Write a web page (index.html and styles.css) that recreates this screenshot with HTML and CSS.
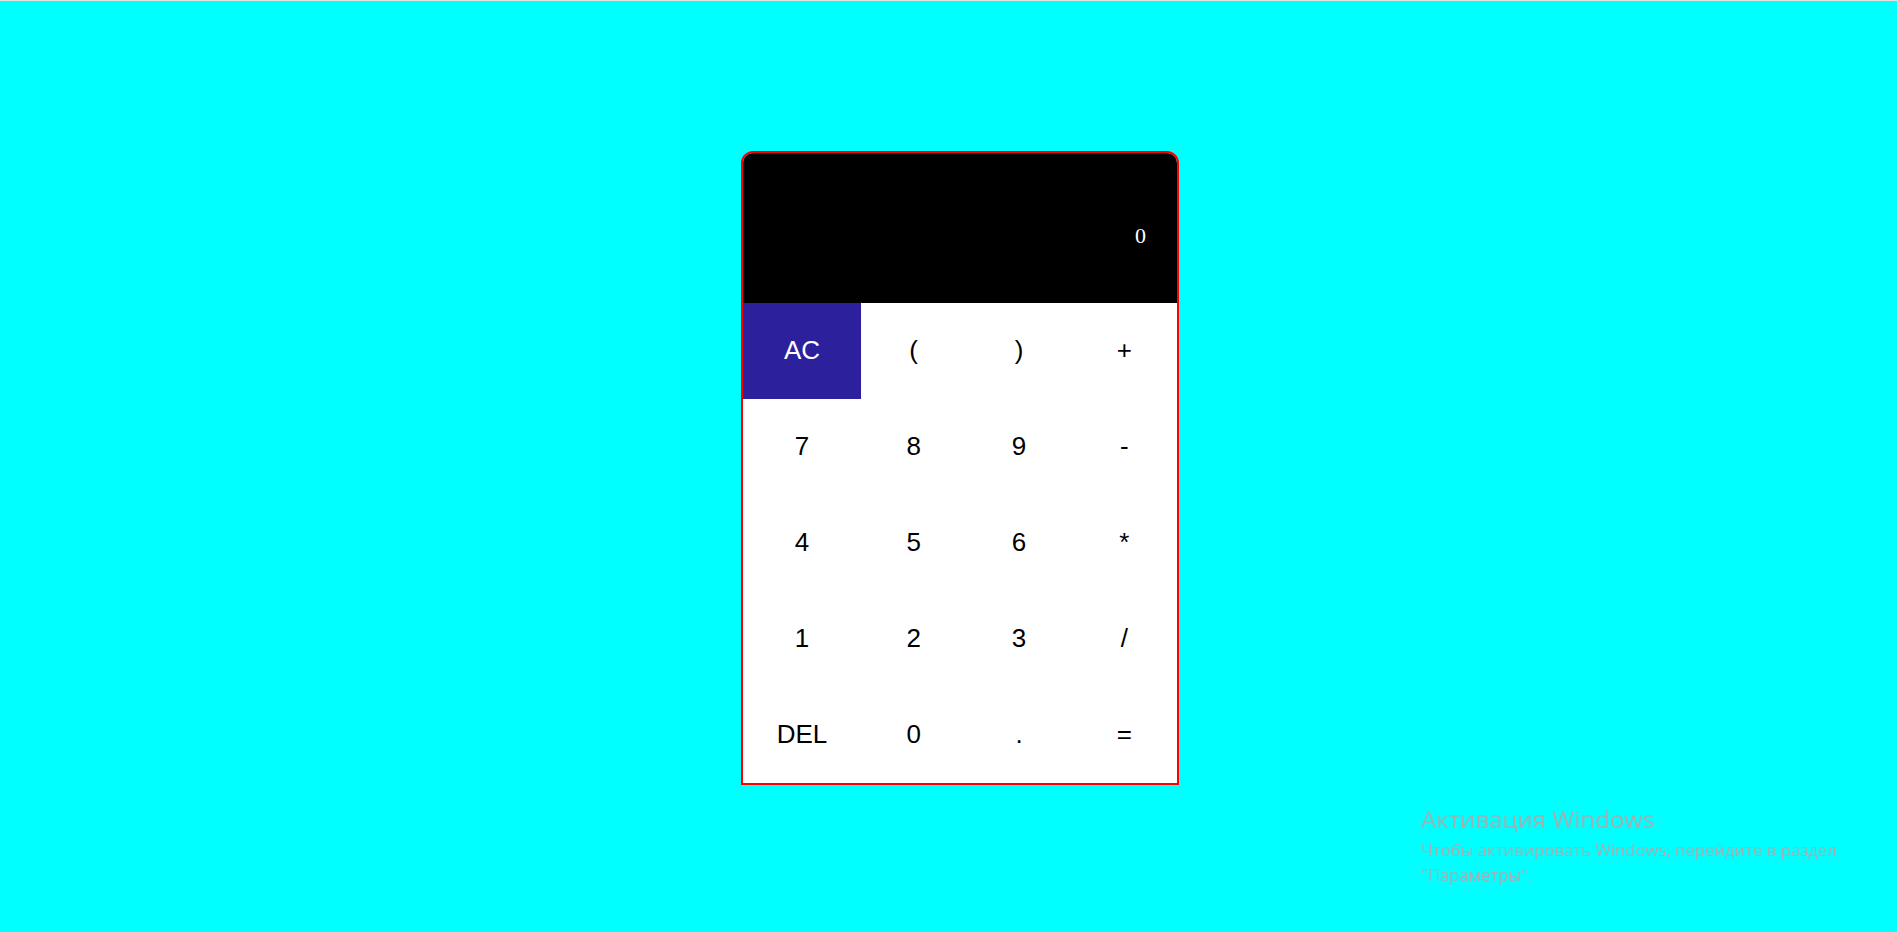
FILE: index.html
```html
<!DOCTYPE html>
<html lang="ru">
<head>
<meta charset="utf-8">
<title>Calculator</title>
<link rel="stylesheet" href="styles.css">
</head>
<body>
  <main class="page">
    <div class="calculator">
      <div class="display"><span class="display-value">0</span></div>
      <div class="keys">
        <button class="key key-clear">AC</button>
        <button class="key">(</button>
        <button class="key">)</button>
        <button class="key">+</button>
        <button class="key">7</button>
        <button class="key">8</button>
        <button class="key">9</button>
        <button class="key">-</button>
        <button class="key">4</button>
        <button class="key">5</button>
        <button class="key">6</button>
        <button class="key">*</button>
        <button class="key">1</button>
        <button class="key">2</button>
        <button class="key">3</button>
        <button class="key">/</button>
        <button class="key">DEL</button>
        <button class="key">0</button>
        <button class="key">.</button>
        <button class="key">=</button>
      </div>
    </div>
  </main>
  <div class="activation">
    <div class="activation-title">Активация Windows</div>
    <div class="activation-text">Чтобы активировать Windows, перейдите в раздел<br>"Параметры".</div>
  </div>
</body>
</html>
```

FILE: styles.css
```css
html {
  margin: 0;
  padding: 0;
  background: #00ffff;
  border-top: 1px solid #e3e3e3;
  height: 100%;
  box-sizing: border-box;
}

body {
  margin: 0;
  padding: 0;
  background: #00ffff;
  font-family: "Liberation Sans", Arial, sans-serif;
}

.page {
  display: flex;
  justify-content: center;
  padding: 150px 0 0 23px;
}

.calculator {
  width: 434px;
  border: 2px solid #ff0000;
  border-radius: 12px 12px 0 0;
  overflow: hidden;
  background: #ffffff;
}

.display {
  height: 134px;
  padding: 16px 31px 0 0;
  background: #000000;
  display: flex;
  justify-content: flex-end;
  align-items: center;
}

.display-value {
  color: #ffffff;
  font-family: "Liberation Serif", "Times New Roman", serif;
  font-size: 22px;
}

.keys {
  display: grid;
  grid-template-columns: 118px repeat(3, 1fr);
  grid-auto-rows: 96px;
}

.key {
  border: none;
  margin: 0;
  padding: 0;
  background: #ffffff;
  color: #000000;
  font-family: "Liberation Sans", Arial, sans-serif;
  font-size: 26px;
  line-height: 1;
  padding-bottom: 2px;
  display: flex;
  align-items: center;
  justify-content: center;
}

.key-clear {
  background: #2c209c;
  color: #ffffff;
}

.activation {
  position: fixed;
  left: 1421px;
  top: 804px;
  color: #9fb0b0;
  font-family: "Open Sans", "Noto Sans", sans-serif;
}

.activation-title {
  font-size: 24px;
  line-height: 30px;
}

.activation-text {
  margin-top: 3px;
  font-size: 16.7px;
  line-height: 25px;
}
```
